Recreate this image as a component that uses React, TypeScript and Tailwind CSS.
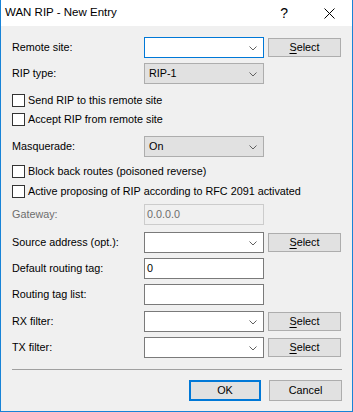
import type { ReactNode } from 'react';

function Chevron() {
  return (
    <svg width="8" height="5" viewBox="0 0 8 5" className="absolute right-[6px] top-[8px]">
      <polyline points="0.5,0.5 4,4 7.5,0.5" fill="none" stroke="#606060" strokeWidth="1" />
    </svg>
  );
}

function Combo({ value, variant = 'edit' }: { value?: string; variant?: 'edit' | 'focus' | 'list' }) {
  const cls =
    variant === 'focus'
      ? 'bg-white border-[#0078d7]'
      : variant === 'list'
      ? 'bg-[#e1e1e1] border-[#adadad]'
      : 'bg-white border-[#7a7a7a]';
  return (
    <div className={`relative w-[120px] h-[21px] border ${cls} flex items-center pl-[4px]`}>
      <span>{value}</span>
      <Chevron />
    </div>
  );
}

function Edit({ value, disabled }: { value?: string; disabled?: boolean }) {
  return (
    <div
      className={`w-[120px] h-[21px] border flex items-center pl-[2px] ${
        disabled ? 'bg-[#f0f0f0] border-[#cccccc] text-[#6d6d6d]' : 'bg-white border-[#7a7a7a]'
      }`}
    >
      {value}
    </div>
  );
}

function SelectButton() {
  return (
    <button className="ml-[4px] w-[73px] h-[19px] bg-[#e1e1e1] border border-[#adadad] flex items-center justify-center">
      <span className="underline underline-offset-[2px]">S</span>elect
    </button>
  );
}

function Row({ label, children, className, disabled }: { label: string; children: ReactNode; className: string; disabled?: boolean }) {
  return (
    <div className={`flex items-center h-[21px] ${className}`}>
      <div className={`w-[132px] ${disabled ? 'text-[#6d6d6d]' : ''}`}>{label}</div>
      {children}
    </div>
  );
}

function Check({ label, className }: { label: string; className: string }) {
  return (
    <div className={`flex items-center h-[19px] gap-[3px] ${className}`}>
      <div className="w-[13px] h-[13px] border border-[#333333] bg-white" />
      <span>{label}</span>
    </div>
  );
}

export default function App() {
  return (
    <div className="w-[353px] h-[412px] bg-[#f0f0f0] border border-t-0 border-[#1883d7] flex flex-col font-['Liberation_Sans',Arial,sans-serif] text-[10.8px] text-black leading-none">
      <div className="h-[26px] bg-white flex items-center shrink-0">
        <span className="ml-[4px] text-[11.5px]">WAN RIP - New Entry</span>
        <span className="ml-auto text-[14px] mr-[36px]">?</span>
        <svg width="11" height="11" viewBox="0 0 11 11" className="mr-[17px]">
          <path d="M0.5,0.5 L10.5,10.5 M10.5,0.5 L0.5,10.5" stroke="#000" strokeWidth="1" />
        </svg>
      </div>

      <div className="flex flex-col pl-[11px] pr-[10px]">
        <Row label="Remote site:" className="mt-[11px]">
          <Combo variant="focus" />
          <SelectButton />
        </Row>
        <Row label="RIP type:" className="mt-[5px]">
          <Combo variant="list" value="RIP-1" />
        </Row>
        <Check label="Send RIP to this remote site" className="mt-[7px]" />
        <Check label="Accept RIP from remote site" className="mt-0" />
        <Row label="Masquerade:" className="mt-[7px]">
          <Combo variant="list" value="On" />
        </Row>
        <Check label="Block back routes (poisoned reverse)" className="mt-[5px]" />
        <Check label="Active proposing of RIP according to RFC 2091 activated" className="mt-[1px]" />
        <Row label="Gateway:" className="mt-[3px]" disabled>
          <Edit value="0.0.0.0" disabled />
        </Row>
        <Row label="Source address (opt.):" className="mt-[7px]">
          <Combo />
          <SelectButton />
        </Row>
        <Row label="Default routing tag:" className="mt-[5px]">
          <Edit value="0" />
        </Row>
        <Row label="Routing tag list:" className="mt-[5px]">
          <Edit />
        </Row>
        <Row label="RX filter:" className="mt-[6px]">
          <Combo />
          <SelectButton />
        </Row>
        <Row label="TX filter:" className="mt-[5px]">
          <Combo />
          <SelectButton />
        </Row>
        <div className="mt-[11px] h-px bg-[#a0a0a0]" />
        <div className="mt-[10px] flex justify-end gap-[8px]">
          <button className="w-[72px] h-[21px] bg-[#e1e1e1] border-2 border-[#0078d7]">OK</button>
          <button className="w-[73px] h-[21px] bg-[#e1e1e1] border border-[#adadad]">Cancel</button>
        </div>
      </div>
    </div>
  );
}
